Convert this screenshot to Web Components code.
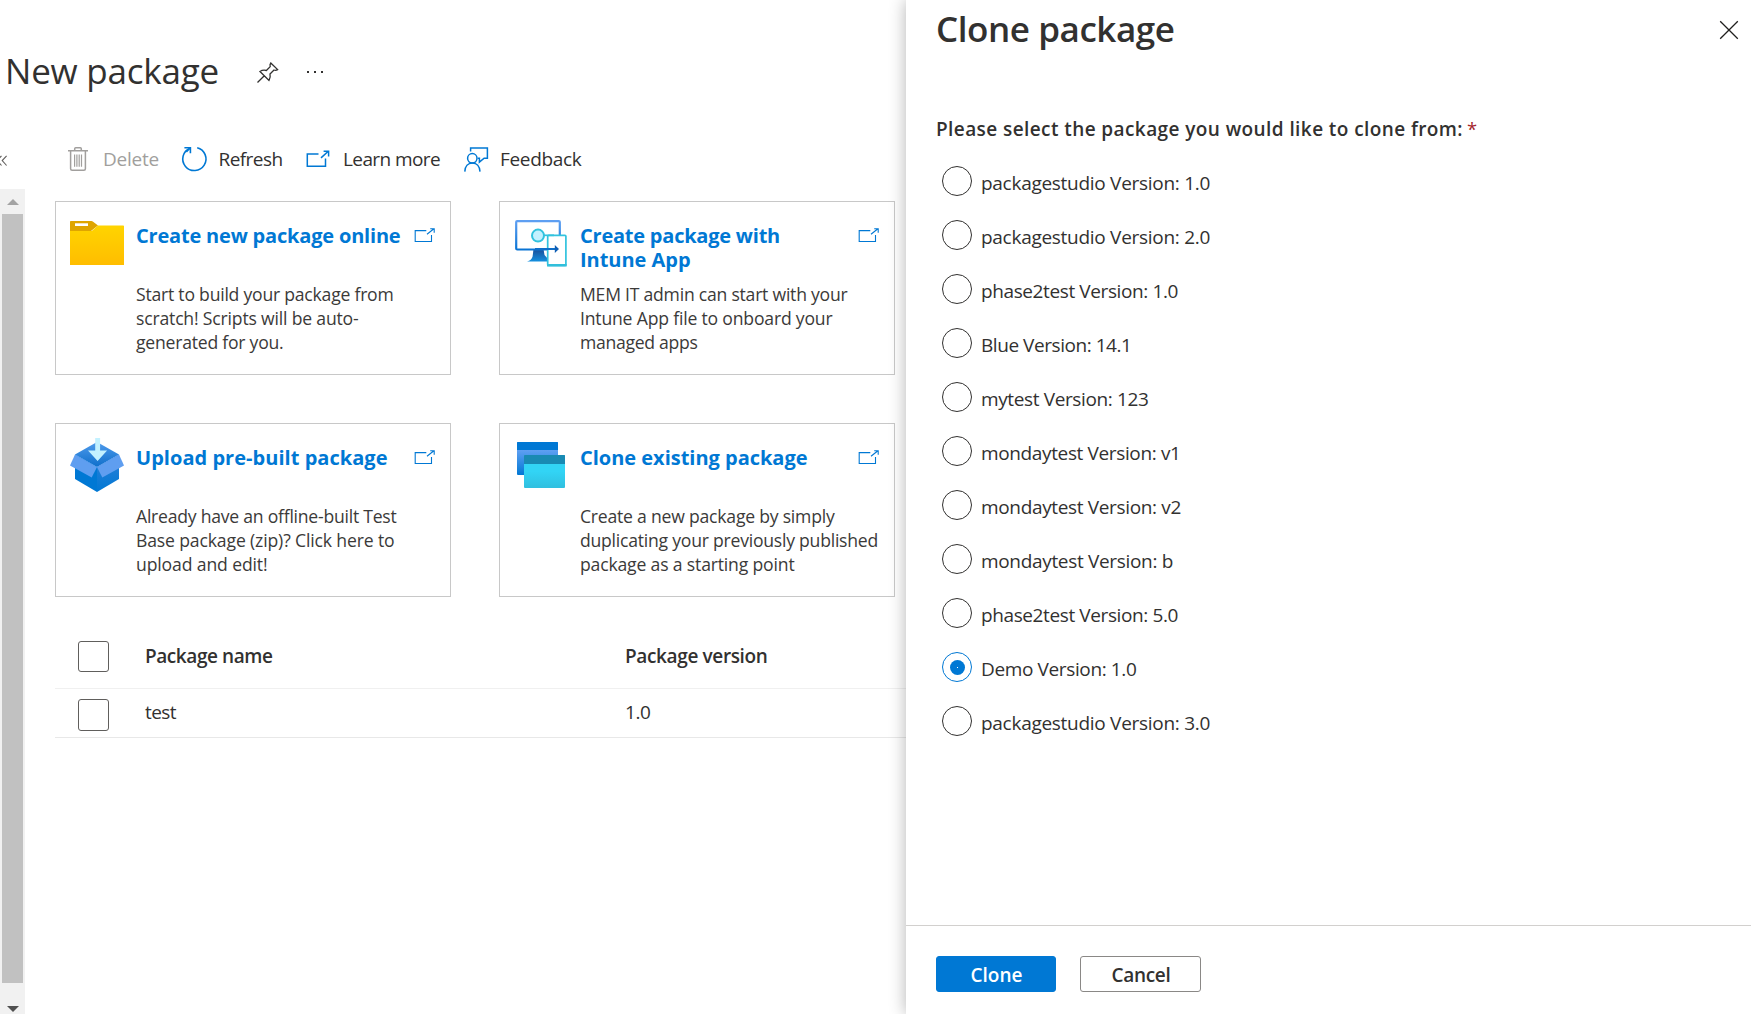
<!DOCTYPE html>
<html lang="en">
<head>
<meta charset="utf-8">
<title>New package</title>
<style>
  html, body { margin: 0; height: 100%; overflow: hidden; background: #fff; }
  body { font-family: "Open Sans", "Noto Sans", sans-serif; color: #323130; }
</style>
</head>
<body>
<test-base-app></test-base-app>
<script>
const define = (name, html, ready) => {
  const tpl = document.createElement('template');
  tpl.innerHTML = html;
  customElements.define(name, class extends HTMLElement {
    connectedCallback() {
      if (this.shadowRoot) return;
      this.attachShadow({ mode: 'open' }).append(tpl.content.cloneNode(true));
      if (ready) ready.call(this, this.shadowRoot);
    }
  });
};

/* One line of text, tracked so that it occupies `w` pixels, 1px of which is kept free on each side. */
define('ui-text', `<style>
  :host { display: block; width: max-content; white-space: nowrap; line-height: 24px; font-size: 19px; padding: 0 1px; }
  :host([kind=title]) { font-size: 35px; line-height: 48px; }
  :host([kind=strong]) { font-weight: 600; }
  :host([kind=heading]) { font-size: 20px; font-weight: 700; color: #0078d4; }
  :host([kind=body]) { font-size: 17.600px; color: #3b3a39; }
</style><span><slot></slot></span>`, function (root) {
  const w = +this.getAttribute('w') - 2;
  const span = root.querySelector('span');
  const n = this.textContent.length;
  span.style.letterSpacing = ((w - span.getBoundingClientRect().width) / n).toFixed(3) + 'px';
});

const ICONS = {
  pin: ['0 0 21 21', 21, 21, `<g fill="none" stroke="#323130" stroke-width="1.300"><path d="M.5 20.500 7.300 13.700M13.800 1l6.800 6.600c-1.300.8-2.600.8-3.600.4L13 12c.6 2.400.2 4.400-1 6.400L3 9.500c1.900-1.300 4.200-1.600 6.400-1l3.800-3.900c-.4-1.300-.2-2.600.6-3.600z"/></g>`],
  dots: ['0 0 18 4', 18, 4, `<g fill="#323130"><rect x="1" y="1" width="2" height="2"/><rect x="8" y="1" width="2" height="2"/><rect x="15" y="1" width="2" height="2"/></g>`],
  collapse: ['0 0 8 12', 8, 12, `<path d="M1.500.8-2.800 5.500 1.500 10.500M6.600.8 2.200 5.500l4.400 5" fill="none" stroke="#605e5c" stroke-width="1.100"/>`],
  trash: ['0 0 20 24', 20, 24, `<g fill="none" stroke="#a19f9d" stroke-width="1.500"><path d="M0 3.700h20M6.700 3.500V1.700q0-1 1-1h4.600q1 0 1 1v1.800M2.600 4v17.700q0 1.500 1.500 1.500h11.800q1.500 0 1.500-1.500V4"/><path stroke-width="1.200" d="M6.600 7.500v12.300M8.900 7.500v12.300M11.200 7.500v12.300M13.500 7.500v12.300"/></g>`],
  refresh: ['0 0 26 26', 26, 26, `<g fill="none" stroke="#0078d4" stroke-width="1.600"><path d="M16.200 1.700A11.600 11.600 0 1 1 9 2.200"/><path d="M3.400 1.700h6v5.600" /><path d="m9.300 1.700-4 4.200"/></g>`],
  external: ['0 0 24 18', 24, 18, `<g fill="none" stroke="#0078d4" stroke-width="1.500"><path d="M12.500 3.900H1.300v12.400h18.200V8.600"/><path d="m15 7.900 7.300-6.700M17.600 1.200h5v5.300"/></g>`],
  feedback: ['0 0 25 25', 25, 25, `<g fill="none" stroke="#0078d4" stroke-width="1.500"><circle cx="8.300" cy="11.300" r="4.700"/><path d="M.8 24.600c.2-5.300 3.300-8.600 7.600-8.600s7.300 3.300 7.600 8.600M6.600 4.400V1.100h16.800v10.100h-3.300l-4.700 3.900v-3.900h-1.600"/></g>`],
  launch: ['0 0 21 14', 21, 14, `<g fill="none" stroke="#0078d4" stroke-width="1.100"><path d="M12.300 2.600H1.200v10.900h16.300V7"/><path d="m13 6.300 6.900-5.500M16.200.7h4v4"/></g>`],
  close: ['0 0 20 20', 20, 20, `<path d="m1.200 1.200 17.600 17.600M18.800 1.200 1.200 18.800" stroke="#201f1e" stroke-width="1.300"/>`],
  folder: ['0 0 54 44', 54, 44, `<defs><linearGradient id="g" x2="0" y2="1"><stop stop-color="#ffd400"/><stop offset="1" stop-color="#ffbd00"/></linearGradient></defs>
    <path d="M.8 0h20.700q.8 0 1.300.4L28 4.500 21 10H0V.8Q0 0 .8 0z" fill="#dfa500"/><path d="M28 4.500h25.300q.7 0 .7.7V44H0V10h21q.8 0 1.300-.6z" fill="url(#g)"/><rect x="5" y="2.300" width="13" height="2.700" fill="#fff"/>`],
  intune: ['0 0 52 47', 52, 47, `<defs><linearGradient id="m" x2="0" y2="1"><stop stop-color="#5e9ff2"/><stop offset="1" stop-color="#0a74d4"/></linearGradient><linearGradient id="s" x2="0" y2="1"><stop stop-color="#1a4c97"/><stop offset="1" stop-color="#1490df"/></linearGradient></defs>
    <path d="M18.500 29h10l1 6 4 4.500V41.500H12q4.500-1 5.600-5z" fill="url(#s)"/>
    <rect x="1.200" y="1.100" width="43.600" height="28.400" rx="1" fill="#fff" stroke="url(#m)" stroke-width="2.200"/>
    <rect x="32.700" y="15.300" width="18.200" height="30.200" rx="1" fill="#fff" stroke="#32c3de" stroke-width="1.700"/><path d="M32 44h19.700v2.500H32z" fill="#32bfdb"/>
    <path d="M29 15.300h10" stroke="#32c3de" stroke-width="1.700"/><circle cx="23" cy="15.600" r="6" fill="#c3f1ff" stroke="#32c3de" stroke-width="2"/>
    <path d="M20 29h22" stroke="#0f6fc9" stroke-width="2"/><path d="m39.800 25 4.200 4-4.200 4z" fill="#0f5fb5"/>`],
  box: ['0 0 54 54', 54, 54, `<defs><linearGradient id="b" x2="0" y2="1"><stop stop-color="#4f9bec"/><stop offset="1" stop-color="#0f6fcb"/></linearGradient><linearGradient id="r" x2="0" y2="1"><stop stop-color="#2f80d8"/><stop offset="1" stop-color="#0078d4"/></linearGradient></defs>
    <path d="M27 4 49 16.500 27 29 5 16.500z" fill="url(#b)"/><path d="M5 16.500 27 29v25L5 41z" fill="#0078d4"/><path d="M49 16.500 27 29v25l22-13z" fill="url(#r)"/>
    <path d="M5 16.500 27 29l-5.300 10.500L0 27.500z" fill="#5f9ef0"/><path d="M49 16.500 27 29l5.300 10.500L54 27.500z" fill="#5f9ef0"/>
    <path d="M25.200 0h4.900v12.500h7L27.600 23 18 12.500h7.200z" fill="#c3f1ff"/>`],
  clone: ['0 0 48 46', 48, 46, `<defs><linearGradient id="c" x2="0" y2="1"><stop offset=".25" stop-color="#5e9ff2"/><stop offset="1" stop-color="#0078d4"/></linearGradient><linearGradient id="d" x2="0" y2="1"><stop offset=".5" stop-color="#32d4f5"/><stop offset="1" stop-color="#30bfdf"/></linearGradient></defs>
    <rect width="41" height="33" rx="1" fill="url(#c)"/><path d="M0 8V.8Q0 0 .8 0h39.400q.8 0 .8.800V8z" fill="#0078d4"/>
    <rect x="7" y="13" width="41" height="33" rx="1" fill="url(#d)"/><path d="M7 22v-8.200q0-.8.800-.8h39.400q.8 0 .8.800V22z" fill="#198ab3"/>`]
};
define('ui-icon', `<style>:host { display: block; flex: none; } svg { display: block; overflow: visible; }</style><div></div>`, function (root) {
  const [box, w, h, art] = ICONS[this.getAttribute('name')];
  root.querySelector('div').innerHTML = `<svg viewBox="${box}" width="${w}" height="${h}">${art}</svg>`;
});

define('page-header', `<style>
  :host { display: flex; align-items: center; height: 48px; padding: 47px 0 0 4px; box-sizing: content-box; }
  .t { width: 253px; }
  ui-icon { margin-top: 3px; }
  ui-icon[name=dots] { margin: 2px 0 0 28px; }
</style><div class="t"><ui-text kind="title" w="216">New package</ui-text></div><ui-icon name="pin"></ui-icon><ui-icon name="dots"></ui-icon>`);

define('tool-bar', `<style>
  :host { display: flex; align-items: center; height: 24px; padding: 52px 0 0 0; }
  .c { width: 68px; padding-top: 4px; box-sizing: border-box; }
  .i { display: flex; align-items: center; }
  .off { color: #a19f9d; }
</style>
<div class="c"><ui-icon name="collapse"></ui-icon></div>
<div class="i off" style="gap:14px;width:113px"><ui-icon name="trash"></ui-icon><ui-text w="58">Delete</ui-text></div>
<div class="i" style="gap:10.500px;width:125px"><ui-icon name="refresh"></ui-icon><ui-text w="66">Refresh</ui-text></div>
<div class="i" style="gap:12px;width:158px"><ui-icon name="external"></ui-icon><ui-text w="99">Learn more</ui-text></div>
<div class="i" style="gap:10px"><ui-icon name="feedback"></ui-icon><ui-text w="83.500">Feedback</ui-text></div>`);

define('scroll-rail', `<style>
  :host { display: flex; flex-direction: column; align-items: center; width: 25px; background: #f1f1f1; }
  svg { display: block; flex: none; }
  .up { height: 25px; padding-top: 10px; box-sizing: border-box; }
  .thumb { width: 21px; height: 769px; background: #c1c1c1; }
  .down { padding-top: 23px; }
</style>
<div class="up"><svg width="12" height="6"><path d="M0 6 6 0l6 6z" fill="#a3a3a3"/></svg></div>
<div class="thumb"></div>
<div class="down"><svg width="12" height="6"><path d="M0 0h12L6 6z" fill="#505050"/></svg></div>`);

define('action-card', `<style>
  :host { display: flex; box-sizing: border-box; width: 396px; height: 174px; border: 1px solid #c8c8c8; background: #fff; }
  .icon { width: 79px; flex: none; display: flex; justify-content: center; padding: var(--top, 19px) 0 0 3px; box-sizing: border-box; }
  .main { flex: 1; padding-top: 22px; }
  .head { display: flex; justify-content: space-between; height: 48px; margin-bottom: 10px; }
  .head ui-icon { margin: 4px 15px 0 0; }
</style>
<div class="icon"><slot name="icon"></slot></div>
<div class="main"><div class="head"><div><slot name="title"></slot></div><ui-icon name="launch"></ui-icon></div><slot></slot></div>`);

define('card-grid', `<style>:host { display: grid; grid-template-columns: 396px 396px; gap: 48px; }</style>
<action-card style="--top:19px"><ui-icon slot="icon" name="folder"></ui-icon>
  <ui-text slot="title" kind="heading" w="266.500">Create new package online</ui-text>
  <ui-text kind="body" w="259.500">Start to build your package from</ui-text><ui-text kind="body" w="224.500">scratch! Scripts will be auto-</ui-text><ui-text kind="body" w="149.500">generated for you.</ui-text></action-card>
<action-card style="--top:18px"><ui-icon slot="icon" name="intune"></ui-icon>
  <ui-text slot="title" kind="heading" w="202">Create package with</ui-text><ui-text slot="title" kind="heading" w="112.500">Intune App</ui-text>
  <ui-text kind="body" w="269.500">MEM IT admin can start with your</ui-text><ui-text kind="body" w="254.500">Intune App file to onboard your</ui-text><ui-text kind="body" w="119.500">managed apps</ui-text></action-card>
<action-card style="--top:14px"><ui-icon slot="icon" name="box"></ui-icon>
  <ui-text slot="title" kind="heading" w="253.500">Upload pre-built package</ui-text>
  <ui-text kind="body" w="262.500">Already have an offline-built Test</ui-text><ui-text kind="body" w="260.500">Base package (zip)? Click here to</ui-text><ui-text kind="body" w="133.500">upload and edit!</ui-text></action-card>
<action-card style="--top:18px"><ui-icon slot="icon" name="clone"></ui-icon>
  <ui-text slot="title" kind="heading" w="229.500">Clone existing package</ui-text>
  <ui-text kind="body" w="256.500">Create a new package by simply</ui-text><ui-text kind="body" w="300">duplicating your previously published</ui-text><ui-text kind="body" w="216.500">package as a starting point</ui-text></action-card>`);

define('check-box', `<style>:host { display: block; box-sizing: border-box; width: 31px; height: var(--h, 31px); border: 1px solid #605e5c; border-radius: 3px; background: #fff; }</style>`);

define('table-row', `<style>
  :host { display: flex; box-sizing: border-box; height: var(--row); padding-left: 23px; border-bottom: 1px solid var(--line); }
  check-box { margin: var(--cb) 35px 0 0; }
  .c { padding-top: var(--tx); }
  .n { width: 480px; }
</style><check-box></check-box><div class="c n"><slot name="name"></slot></div><div class="c"><slot name="version"></slot></div>`);

define('package-table', `<style>:host { display: block; padding-top: 23px; }</style>
<table-row style="--row:69px;--line:#f0f0f0;--cb:21px;--tx:24px"><ui-text slot="name" kind="strong" w="129.500">Package name</ui-text><ui-text slot="version" kind="strong" w="144.500">Package version</ui-text></table-row>
<table-row style="--row:49px;--line:#e8e8e8;--cb:10px;--tx:11px;--h:32px"><ui-text slot="name" w="33">test</ui-text><ui-text slot="version" w="27.500">1.0</ui-text></table-row>`);

define('radio-option', `<style>
  :host { display: flex; gap: 8px; height: 54px; }
  i { box-sizing: border-box; width: 30px; height: 30px; border: 1.300px solid #323130; border-radius: 50%; display: flex; align-items: center; justify-content: center; }
  :host([checked]) i { border-color: #0078d4; }
  :host([checked]) i::after { content: ""; width: 15px; height: 15px; border-radius: 50%; background: radial-gradient(circle, #fff 0 .5px, #0078d4 .7px); }
  ::slotted(*) { margin-top: 4.500px; }
</style><i></i><slot></slot>`);

define('push-button', `<style>
  :host { display: flex; justify-content: center; box-sizing: border-box; width: 121px; height: 36px; padding: 6px 0 0 1px; border: 1px solid #8a8886; border-radius: 3px; background: #fff; color: #323130; }
  :host([primary]) { width: 120px; background: #0078d4; border-color: #0078d4; color: #fff; }
</style><slot></slot>`);

define('clone-panel', `<style>
  :host { display: flex; flex-direction: column; width: 845px; height: 1014px; background: #fff; box-shadow: 0 0 16px rgba(0,0,0,.3); }
  header { display: flex; justify-content: space-between; padding: 5px 12px 0 29px; height: 48px; }
  header ui-icon { margin-top: 15px; }
  main { flex: 1; padding: 64px 0 0 29px; }
  .q { display: flex; gap: 3px; margin-bottom: 25px; }
  .q b { color: #a4262c; font-weight: 400; font-size: 18.400px; line-height: 24px; }
  .opts { padding-left: 7px; }
  footer { display: flex; gap: 24px; box-sizing: border-box; height: 89px; padding: 30px 0 0 30px; border-top: 1px solid #d2d0ce; }
</style>
<header><ui-text kind="title" w="240.500" style="font-weight:600">Clone package</ui-text><ui-icon name="close"></ui-icon></header>
<main>
  <div class="q"><ui-text kind="strong" w="529">Please select the package you would like to clone from:</ui-text><b>*</b></div>
  <div class="opts">
    <radio-option><ui-text w="231">packagestudio Version: 1.0</ui-text></radio-option>
    <radio-option><ui-text w="231">packagestudio Version: 2.0</ui-text></radio-option>
    <radio-option><ui-text w="199">phase2test Version: 1.0</ui-text></radio-option>
    <radio-option><ui-text w="152.500">Blue Version: 14.1</ui-text></radio-option>
    <radio-option><ui-text w="169.500">mytest Version: 123</ui-text></radio-option>
    <radio-option><ui-text w="201.500">mondaytest Version: v1</ui-text></radio-option>
    <radio-option><ui-text w="202">mondaytest Version: v2</ui-text></radio-option>
    <radio-option><ui-text w="194">mondaytest Version: b</ui-text></radio-option>
    <radio-option><ui-text w="199">phase2test Version: 5.0</ui-text></radio-option>
    <radio-option checked><ui-text w="157.500">Demo Version: 1.0</ui-text></radio-option>
    <radio-option><ui-text w="231">packagestudio Version: 3.0</ui-text></radio-option>
  </div>
</main>
<footer><push-button primary><ui-text kind="strong" w="54">Clone</ui-text></push-button><push-button><ui-text kind="strong" w="61">Cancel</ui-text></push-button></footer>`);

define('test-base-app', `<style>
  :host { display: flex; width: 1751px; height: 1014px; overflow: hidden; }
  .left { width: 906px; flex: none; display: flex; flex-direction: column; }
  .below { display: flex; flex: 1; margin-top: 18px; }
  .content { flex: 1; padding: 12px 0 0 30px; }
  clone-panel { flex: none; z-index: 1; }
</style>
<div class="left"><page-header></page-header><tool-bar></tool-bar>
  <div class="below"><scroll-rail></scroll-rail><div class="content"><card-grid></card-grid><package-table></package-table></div></div>
</div>
<clone-panel></clone-panel>`);
</script>
</body>
</html>
